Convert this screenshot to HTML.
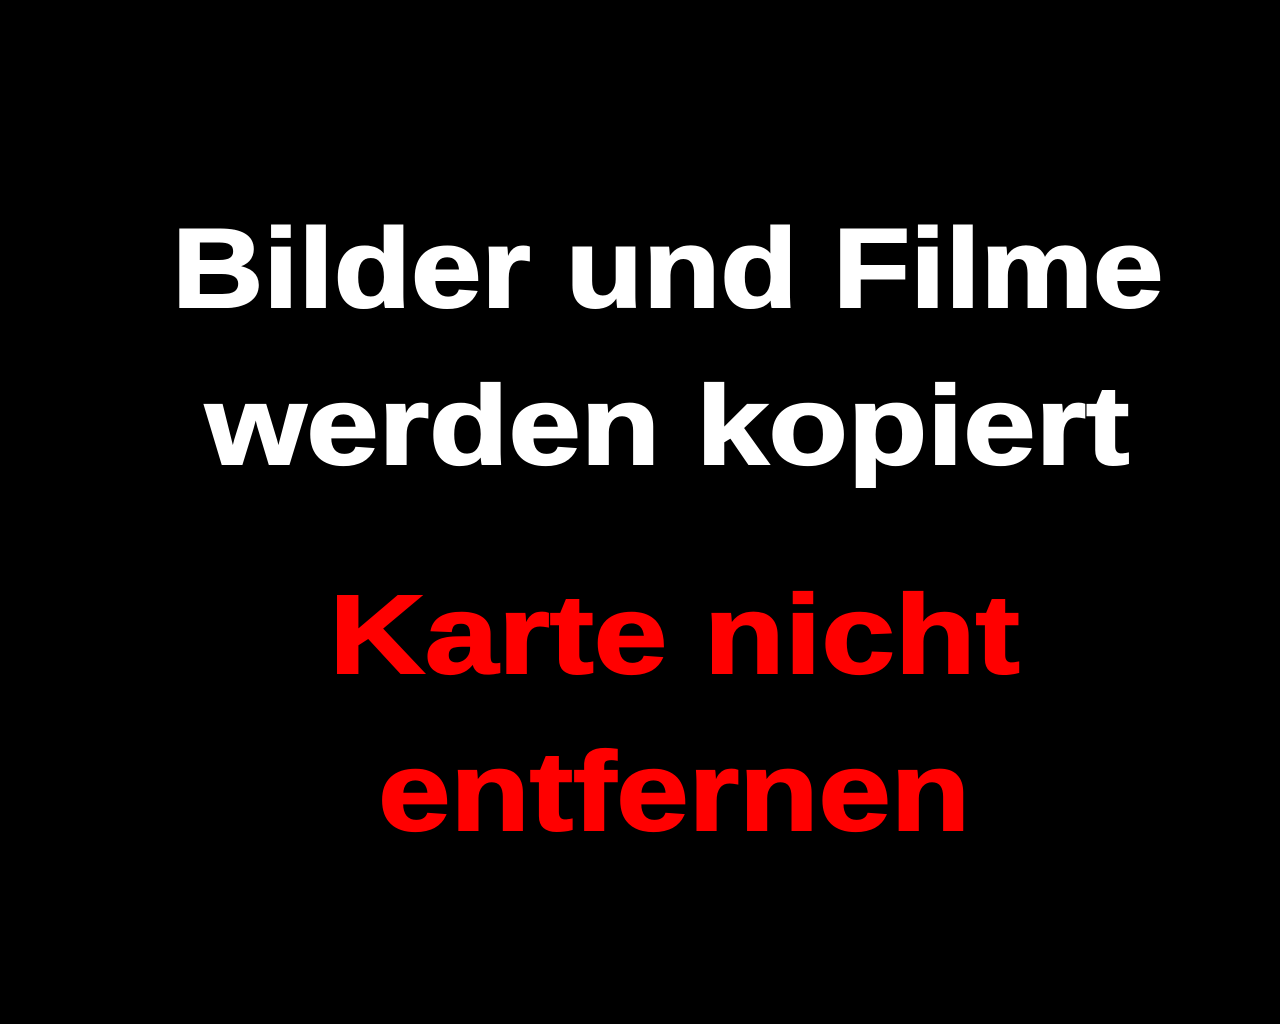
<!DOCTYPE html>
<html><head><meta charset="utf-8"><style>
html,body{margin:0;padding:0;background:#000;width:1280px;height:1024px;overflow:hidden}
.l{position:absolute;left:0;width:1280px;text-align:center;font-family:"Liberation Sans",Arial,sans-serif;font-weight:bold;font-size:112px;line-height:112px;white-space:nowrap}
.l span{display:inline-block;transform:scaleX(1.15);-webkit-text-stroke:2px currentColor}
.w{color:#fff}.r{color:#f00}
</style></head><body>
<div class="l w" style="top:213px;left:28px"><span style="transform:scaleX(1.13)">Bilder und Filme</span></div>
<div class="l w" style="top:370px;left:27px"><span style="transform:scaleX(1.16)">werden kopiert</span></div>
<div class="l r" style="top:579px;left:34px"><span style="transform:scaleX(1.18)">Karte nicht</span></div>
<div class="l r" style="top:736px;left:34px"><span style="transform:scaleX(1.16)">entfernen</span></div>
</body></html>
